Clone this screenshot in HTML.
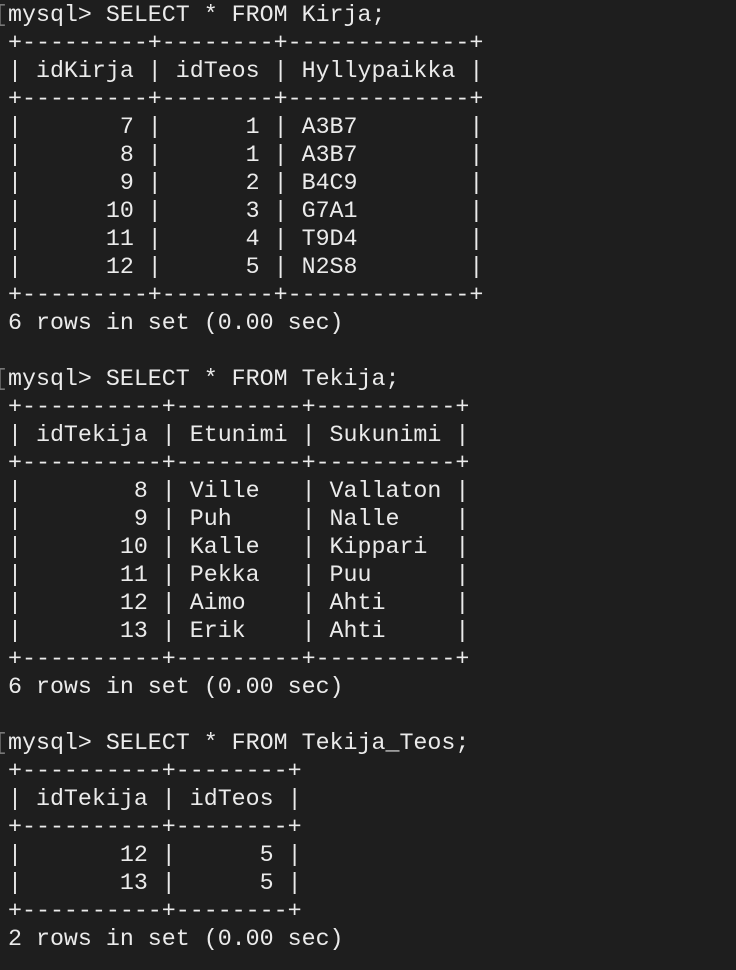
<!DOCTYPE html>
<html><head><style>
html,body{margin:0;padding:0;background:#1e1e1e;width:736px;height:970px;overflow:hidden}
pre{margin:0;padding:0 0 0 8px;font-family:"Liberation Mono",monospace;font-size:23.3px;line-height:28px;color:#ebebeb;position:relative;top:1px}
.b{position:absolute;left:-6px;color:#777;}
</style></head><body><pre><span class="b">[</span>mysql&gt; SELECT * FROM Kirja;
+---------+--------+-------------+
| idKirja | idTeos | Hyllypaikka |
+---------+--------+-------------+
|       7 |      1 | A3B7        |
|       8 |      1 | A3B7        |
|       9 |      2 | B4C9        |
|      10 |      3 | G7A1        |
|      11 |      4 | T9D4        |
|      12 |      5 | N2S8        |
+---------+--------+-------------+
6 rows in set (0.00 sec)

<span class="b">[</span>mysql&gt; SELECT * FROM Tekija;
+----------+---------+----------+
| idTekija | Etunimi | Sukunimi |
+----------+---------+----------+
|        8 | Ville   | Vallaton |
|        9 | Puh     | Nalle    |
|       10 | Kalle   | Kippari  |
|       11 | Pekka   | Puu      |
|       12 | Aimo    | Ahti     |
|       13 | Erik    | Ahti     |
+----------+---------+----------+
6 rows in set (0.00 sec)

<span class="b">[</span>mysql&gt; SELECT * FROM Tekija_Teos;
+----------+--------+
| idTekija | idTeos |
+----------+--------+
|       12 |      5 |
|       13 |      5 |
+----------+--------+
2 rows in set (0.00 sec)
</pre></body></html>
